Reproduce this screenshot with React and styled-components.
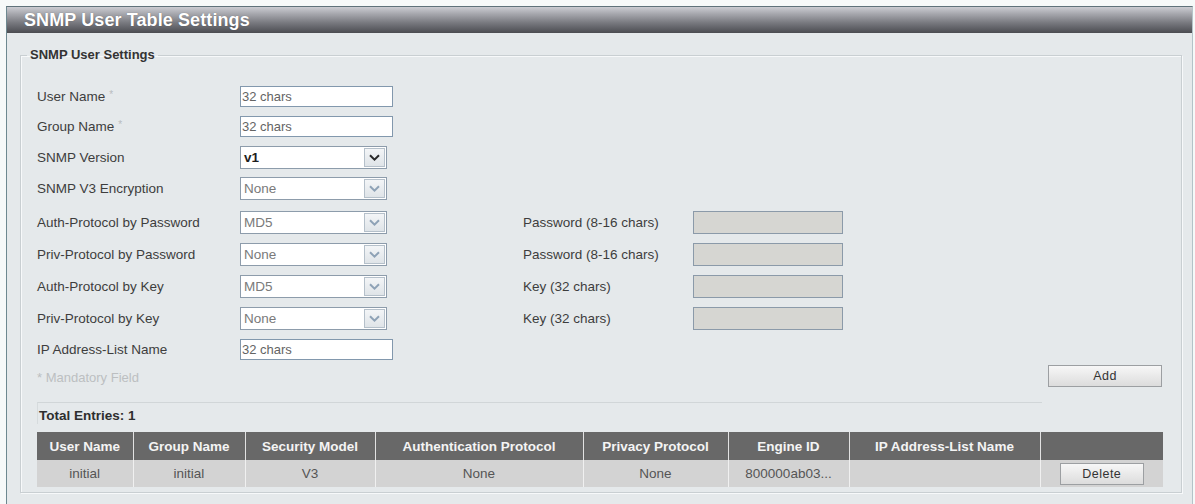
import React from "react";
import styled, { createGlobalStyle } from "styled-components";

const Global = createGlobalStyle`
  html, body { margin: 0; padding: 0; background: #f6f9f9; }
  body { font-family: "Liberation Sans", Arial, sans-serif; color: #3c3c3c; }
`;

const Page = styled.div`
  width: 1195px;
  height: 504px;
  padding: 6px 2px 0 6px;
  box-sizing: border-box;
  overflow: hidden;
`;

const Panel = styled.div`
  width: 1187px;
  height: 520px;
  box-sizing: border-box;
  background: #e5e9eb;
  border-top: 1px solid #5f727a;
  border-left: 1px solid #6d8890;
  border-right: 1px solid #b4c3c8;
`;

const TitleBar = styled.div`
  height: 26px;
  display: flex;
  align-items: center;
  padding-left: 17px;
  background: linear-gradient(#cbccd2 0%, #a8a9af 25%, #797a80 60%, #4b4c51 100%);
  color: #fff;
  font-weight: bold;
  font-size: 18px;
  text-shadow: 0 0 1px rgba(0, 0, 0, 0.35);
  letter-spacing: 0.1px;
`;

const Body = styled.div`
  padding: 0 10px 0 13px;
`;

const Fieldset = styled.fieldset`
  margin: 14px 0 0;
  padding: 0 8px 5px 6px;
  border: 1px solid #c9cfd2;
  box-shadow: inset 1px 1px 0 #f7f9fa, 1px 1px 0 #f7f9fa;
  min-width: 0;
`;

const Legend = styled.legend`
  padding: 0 3px;
  font-size: 13px;
  line-height: 16px;
  font-weight: bold;
  color: #333;
`;

const Content = styled.div`
  padding: 18px 10px 0;
`;

const Row = styled.div`
  display: grid;
  grid-template-columns: 203px 283px 170px 150px 1fr;
  align-items: center;
  height: 30px;
  margin-top: ${(p) => p.$mt || 0}px;
  font-size: 13.5px;
`;

const Label = styled.span`
  color: #3d3d3d;
  white-space: nowrap;
`;

const Star = styled.span`
  color: #b9bcbe;
  font-size: 10px;
  margin-left: 4px;
  vertical-align: top;
`;

const TextInput = styled.div`
  width: 153px;
  height: 21px;
  box-sizing: border-box;
  border: 1px solid #8298ad;
  background: #fff;
  padding: 0 1px;
  display: flex;
  align-items: center;
  font-size: 13px;
  color: #646464;
`;

const Select = styled.div`
  width: 147px;
  height: 23px;
  box-sizing: border-box;
  border: 1px solid #8d9cab;
  background: #fff;
  display: flex;
  align-items: center;
  justify-content: space-between;
  padding-left: 3px;
  font-size: 13.5px;
  color: ${(p) => (p.$active ? "#1e1e1e" : "#7a7a7a")};
  font-weight: ${(p) => (p.$active ? "bold" : "normal")};
`;

const Arrow = styled.span`
  width: 21px;
  height: 19px;
  margin-right: 1px;
  box-sizing: border-box;
  border: 1px solid #b5c0ca;
  background: linear-gradient(#f3f5f7, #dfe4e8);
  display: flex;
  align-items: center;
  justify-content: center;
`;

const KeyInput = styled.div`
  width: 150px;
  height: 23px;
  box-sizing: border-box;
  border: 1px solid #8b9aa9;
  background: #d6d6d2;
`;

const Mandatory = styled.span`
  color: #bcbfc1;
  font-size: 13px;
`;

const Button = styled.button`
  width: ${(p) => p.$w}px;
  height: 22px;
  box-sizing: border-box;
  border: 1px solid #9c9fa2;
  background: linear-gradient(#f7f7f7, #dcdcdc);
  font-family: "Liberation Sans", Arial, sans-serif;
  font-size: 12.5px;
  letter-spacing: 0.5px;
  color: #333;
  padding: 0;
`;

const AddCell = styled.div`
  display: flex;
  justify-content: flex-end;
  padding-right: 1px;
  margin-top: -2px;
`;

const Divider = styled.div`
  width: 1003px;
  margin-top: 10px;
  padding: 5px 0 0 1px;
  border-top: 1px solid #d1d6d8;
  border-left: 1px solid #d6dbdd;
  font-size: 13.5px;
  line-height: 16px;
  font-weight: bold;
  color: #2e2e2e;
`;

const Table = styled.table`
  margin-top: 8px;
  width: 1126px;
  table-layout: fixed;
  border-collapse: collapse;
  font-size: 13.5px;
`;

const Th = styled.th`
  height: 28px;
  padding: 0;
  background: #686868;
  color: #f4f4f4;
  font-weight: bold;
  text-align: center;
  border-left: 1px solid #e2e2e2;
  &:first-child { border-left: none; }
`;

const Td = styled.td`
  height: 27px;
  padding: 0;
  background: #d3d3d3;
  color: #555;
  text-align: center;
  white-space: nowrap;
  overflow: hidden;
  border-left: 1px solid #f0f0f0;
  &:first-child { border-left: none; }
`;

const Chevron = ({ active }) => (
  <svg width="11" height="7" viewBox="0 0 11 7">
    <path
      d="M1 1.2 L5.5 5.6 L10 1.2"
      fill="none"
      stroke={active ? "#2a2a2a" : "#8ea2b6"}
      strokeWidth="2"
    />
  </svg>
);

const Dropdown = ({ value, active }) => (
  <Select $active={active}>
    <span>{value}</span>
    <Arrow>
      <Chevron active={active} />
    </Arrow>
  </Select>
);

const formRows = [
  { label: "User Name", star: true, kind: "text", mt: 0 },
  { label: "Group Name", star: true, kind: "text", mt: 0 },
  { label: "SNMP Version", kind: "select", value: "v1", active: true, mt: 1 },
  { label: "SNMP V3 Encryption", kind: "select", value: "None", mt: 1 },
  { label: "Auth-Protocol by Password", kind: "select", value: "MD5", side: "Password (8-16 chars)", mt: 4 },
  { label: "Priv-Protocol by Password", kind: "select", value: "None", side: "Password (8-16 chars)", mt: 2 },
  { label: "Auth-Protocol by Key", kind: "select", value: "MD5", side: "Key (32 chars)", mt: 2 },
  { label: "Priv-Protocol by Key", kind: "select", value: "None", side: "Key (32 chars)", mt: 2 },
  { label: "IP Address-List Name", kind: "text", mt: 1 },
];

const columns = [
  ["User Name", 96],
  ["Group Name", 112],
  ["Security Model", 130],
  ["Authentication Protocol", 208],
  ["Privacy Protocol", 145],
  ["Engine ID", 121],
  ["IP Address-List Name", 191],
  ["", 123],
];

const entry = ["initial", "initial", "V3", "None", "None", "800000ab03..."];

export default function App() {
  return (
    <>
      <Global />
      <Page>
        <Panel>
          <TitleBar>SNMP User Table Settings</TitleBar>
          <Body>
            <Fieldset>
              <Legend>SNMP User Settings</Legend>
              <Content>
                {formRows.map((r) => (
                  <Row key={r.label} $mt={r.mt}>
                    <Label>
                      {r.label}
                      {r.star && <Star>*</Star>}
                    </Label>
                    {r.kind === "text" ? (
                      <TextInput>32 chars</TextInput>
                    ) : (
                      <Dropdown value={r.value} active={r.active} />
                    )}
                    {r.side ? <Label>{r.side}</Label> : <span />}
                    {r.side ? <KeyInput /> : <span />}
                  </Row>
                ))}
                <Row $mt={-2}>
                  <Mandatory>* Mandatory Field</Mandatory>
                  <span />
                  <span />
                  <span />
                  <AddCell>
                    <Button $w={114}>Add</Button>
                  </AddCell>
                </Row>
                <Divider>Total Entries: 1</Divider>
                <Table>
                  <colgroup>
                    {columns.map(([name, w], i) => (
                      <col key={i} style={{ width: w }} />
                    ))}
                  </colgroup>
                  <thead>
                    <tr>
                      {columns.map(([name], i) => (
                        <Th key={i}>{name}</Th>
                      ))}
                    </tr>
                  </thead>
                  <tbody>
                    <tr>
                      {entry.map((v, i) => (
                        <Td key={i}>{v}</Td>
                      ))}
                      <Td />
                      <Td>
                        <Button $w={84}>Delete</Button>
                      </Td>
                    </tr>
                  </tbody>
                </Table>
              </Content>
            </Fieldset>
          </Body>
        </Panel>
      </Page>
    </>
  );
}
